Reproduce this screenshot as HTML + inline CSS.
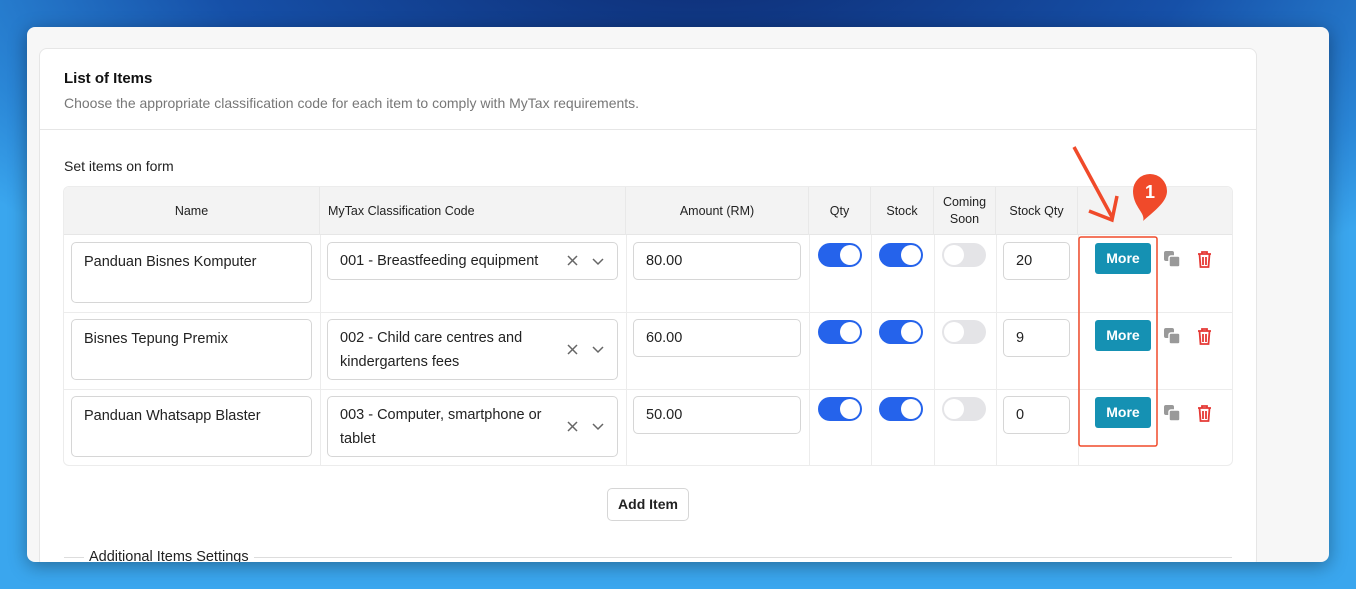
<!DOCTYPE html>
<html><head><style>
*{box-sizing:border-box;margin:0;padding:0}
html{width:1356px;height:589px;overflow:hidden}
body{width:1356px;height:589px;overflow:hidden;font-family:"Liberation Sans",sans-serif;position:relative;
background:radial-gradient(ellipse 900px 420px at 700px -60px,#0d2a70 0%,#1650a8 55%,#2a86d6 85%,#3aa6ee 100%);}
.win{position:absolute;left:27px;top:27px;width:1302px;height:535px;background:#f7f7f7;border-radius:8px;overflow:hidden;box-shadow:0 4px 18px rgba(0,0,0,.35)}
.card{position:absolute;left:12px;top:21px;width:1218px;height:520px;background:#fff;border:1px solid #e6e6e6;border-radius:8px}
.a{position:absolute}
.t{font-size:15px;color:#111;font-weight:bold}
.s{font-size:14px;color:#777}
.hd{position:absolute;top:0;height:48px;display:flex;align-items:center;justify-content:center;font-size:12.5px;color:#222;text-align:center;line-height:17px;border-right:1px solid #e8e8e8}
.inp{position:absolute;border:1px solid #d6d6d6;border-radius:5px;background:#fff;font-size:14.5px;color:#222;padding:11px 12px;line-height:24px}
.tg{position:absolute;width:44px;height:24px;border-radius:12px;background:#2563eb}
.tg::after{content:"";position:absolute;top:2px;right:2px;width:20px;height:20px;border-radius:50%;background:#fff}
.tg.off{background:#e4e4e7}.tg.off::after{left:2px;right:auto}
.more{position:absolute;width:56px;height:31px;background:#1591b3;color:#fff;font-weight:bold;font-size:14px;border-radius:3px;text-align:center;line-height:31px}
</style></head><body>
<div class="win">
<div class="card">
<div class="a t" style="left:24px;top:21px">List of Items</div>
<div class="a s" style="left:24px;top:46px">Choose the appropriate classification code for each item to comply with MyTax requirements.</div>
<div class="a" style="left:0;top:80px;width:1216px;height:1px;background:#e6e6e6"></div>
<div class="a" style="left:24px;top:109px;font-size:14px;color:#222">Set items on form</div>
<div class="a" style="left:23px;top:137px;width:1170px;height:280px;border:1px solid #ececec;border-radius:6px;overflow:hidden">
 <div class="a" style="left:0;top:0;width:1170px;height:48px;background:#f3f3f3;border-bottom:1px solid #e6e6e6"></div>
 <div class="hd" style="left:0;width:256px">Name</div>
 <div class="hd" style="left:256px;width:306px;justify-content:flex-start;padding-left:8px">MyTax Classification Code</div>
 <div class="hd" style="left:562px;width:183px">Amount (RM)</div>
 <div class="hd" style="left:745px;width:62px">Qty</div>
 <div class="hd" style="left:807px;width:63px">Stock</div>
 <div class="hd" style="left:870px;width:62px">Coming<br>Soon</div>
 <div class="hd" style="left:932px;width:82px">Stock Qty</div>
 <div class="a" style="left:0;top:125px;width:1170px;height:1px;background:#ececec"></div>
 <div class="a" style="left:0;top:202px;width:1170px;height:1px;background:#ececec"></div>
 <div class="a" style="left:256px;top:48px;width:1px;height:232px;background:#ececec"></div>
 <div class="a" style="left:562px;top:48px;width:1px;height:232px;background:#ececec"></div>
 <div class="a" style="left:745px;top:48px;width:1px;height:232px;background:#ececec"></div>
 <div class="a" style="left:807px;top:48px;width:1px;height:232px;background:#ececec"></div>
 <div class="a" style="left:870px;top:48px;width:1px;height:232px;background:#ececec"></div>
 <div class="a" style="left:932px;top:48px;width:1px;height:232px;background:#ececec"></div>
 <div class="a" style="left:1014px;top:48px;width:1px;height:232px;background:#ececec"></div>
</div>
</div>
</div>
<div style="position:absolute;left:0;top:0">
<div class="inp" style="left:71px;top:242px;width:241px;height:61px;padding-top:7px">Panduan Bisnes Komputer</div>
<div class="inp" style="left:327px;top:242px;width:291px;height:38px;padding-top:6px">001 - Breastfeeding equipment</div>
<div class="inp" style="left:633px;top:242px;width:168px;height:38px;padding-top:6px">80.00</div>
<div class="tg" style="left:818px;top:243px"></div><div class="tg" style="left:879px;top:243px"></div><div class="tg off" style="left:942px;top:243px"></div>
<div class="inp" style="left:1003px;top:242px;width:67px;height:38px;padding-top:6px">20</div>
<div class="inp" style="left:71px;top:319px;width:241px;height:61px;padding-top:7px">Bisnes Tepung Premix</div>
<div class="inp" style="left:327px;top:319px;width:291px;height:61px;padding-top:6px">002 - Child care centres and<br>kindergartens fees</div>
<div class="inp" style="left:633px;top:319px;width:168px;height:38px;padding-top:6px">60.00</div>
<div class="tg" style="left:818px;top:320px"></div><div class="tg" style="left:879px;top:320px"></div><div class="tg off" style="left:942px;top:320px"></div>
<div class="inp" style="left:1003px;top:319px;width:67px;height:38px;padding-top:6px">9</div>
<div class="inp" style="left:71px;top:396px;width:241px;height:61px;padding-top:7px">Panduan Whatsapp Blaster</div>
<div class="inp" style="left:327px;top:396px;width:291px;height:61px;padding-top:6px">003 - Computer, smartphone or<br>tablet</div>
<div class="inp" style="left:633px;top:396px;width:168px;height:38px;padding-top:6px">50.00</div>
<div class="tg" style="left:818px;top:397px"></div><div class="tg" style="left:879px;top:397px"></div><div class="tg off" style="left:942px;top:397px"></div>
<div class="inp" style="left:1003px;top:396px;width:67px;height:38px;padding-top:6px">0</div>
</div>
<svg class="a" style="left:0;top:0" width="1356" height="589">
<g stroke="#666" stroke-width="1.5" fill="none">
<path d="M568 256l9 9M577 256l-9 9M593 259l5 5 5-5"/>
<path d="M568 345l9 9M577 345l-9 9M593 347l5 5 5-5"/>
<path d="M568 422l9 9M577 422l-9 9M593 424l5 5 5-5"/>
</g>
<g fill="#999"><rect x="1164" y="251" width="10" height="10" rx="2"/><rect x="1169" y="256" width="11" height="11" rx="2" stroke="#fff" stroke-width="1.5"/>
<rect x="1164" y="328" width="10" height="10" rx="2"/><rect x="1169" y="333" width="11" height="11" rx="2" stroke="#fff" stroke-width="1.5"/>
<rect x="1164" y="405" width="10" height="10" rx="2"/><rect x="1169" y="410" width="11" height="11" rx="2" stroke="#fff" stroke-width="1.5"/></g>
<g fill="none" stroke="#e53935" stroke-width="1.8">
<path d="M1198 254h13M1202 254v-2h5v2M1199.5 254l1 13h8l1-13M1203 257v8M1206 257v8"/>
<path d="M1198 331h13M1202 331v-2h5v2M1199.5 331l1 13h8l1-13M1203 334v8M1206 334v8"/>
<path d="M1198 408h13M1202 408v-2h5v2M1199.5 408l1 13h8l1-13M1203 411v8M1206 411v8"/>
</g>
<rect x="1079" y="237" width="78" height="209" rx="2" fill="none" stroke="#f04a2a" stroke-width="1.5"/>
<path d="M1074 147l38 70" stroke="#f04a2a" stroke-width="3.5"/>
<path d="M1089 211l23 9 5-24" stroke="#f04a2a" stroke-width="3.5" fill="none"/>
<path d="M1150 174a17 17 0 0 1 17 17c0 10-10 18-24 30c3-8-10-14-10-30a17 17 0 0 1 17-17z" fill="#f04a2a"/>
<text x="1150" y="198" fill="#fff" font-size="18" font-family="Liberation Sans" text-anchor="middle" font-weight="bold">1</text>
<rect x="64" y="557" width="1168" height="1" fill="#ddd"/>
</svg>
<div class="more" style="left:1095px;top:243px">More</div>
<div class="more" style="left:1095px;top:320px">More</div>
<div class="more" style="left:1095px;top:397px">More</div>
<div class="a" style="left:607px;top:488px;width:82px;height:33px;border:1px solid #d6d6d6;border-radius:5px;background:#fff;font-size:14px;font-weight:bold;color:#222;text-align:center;line-height:31px">Add Item</div>
<div class="a" style="left:84px;top:548px;background:#fff;padding:0 5px;font-size:14.5px;color:#222;height:14px;overflow:hidden;line-height:18px">Additional Items Settings</div>
</body></html>
